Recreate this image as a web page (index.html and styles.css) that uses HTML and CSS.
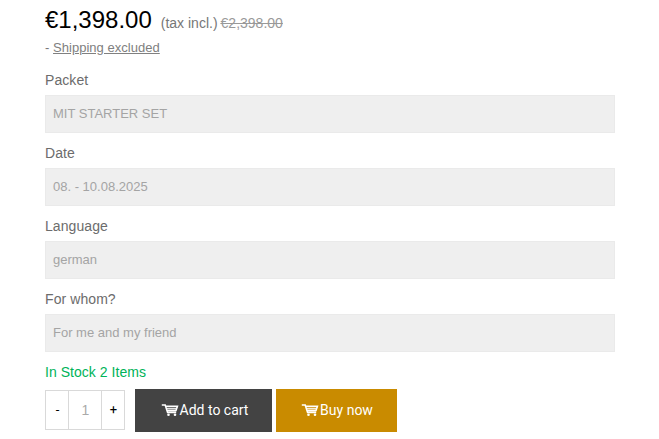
FILE: index.html
```html
<!DOCTYPE html>
<html lang="en">
  <head>
    <meta charset="UTF-8" />
    <meta name="viewport" content="width=device-width, initial-scale=1.0" />
    <title>Product options</title>
    <link rel="stylesheet" href="styles.css">
  </head>
  <body>
    <form class="product">
      <div class="prices">
        <span class="price">€1,398.00</span>
        <span class="tax">(tax incl.)</span>
        <span class="old-price">€2,398.00</span>
      </div>
      <div class="shipping">- <a href="#">Shipping excluded</a></div>

      <div class="option">
        <div class="option-label">Packet</div>
        <div class="option-value">MIT STARTER SET</div>
      </div>
      <div class="option">
        <div class="option-label">Date</div>
        <div class="option-value">08. - 10.08.2025</div>
      </div>
      <div class="option">
        <div class="option-label">Language</div>
        <div class="option-value">german</div>
      </div>
      <div class="option">
        <div class="option-label">For whom?</div>
        <div class="option-value">For me and my friend</div>
      </div>

      <div class="stock">In Stock 2 Items</div>

      <div class="actions">
        <div class="quantity">
          <button type="button" class="qty-btn">-</button>
          <span class="qty-value">1</span>
          <button type="button" class="qty-btn">+</button>
        </div>
        <button type="button" class="btn btn-cart">
          <svg class="icon" viewBox="0 0 18 14"><path class="frame" d="M.8 2h3.4l2.4 7.4h8.6M4.8 3.2h11.6l-1.4 4.2H6.2" /><path class="rack" d="M6 5.3h9" /><circle cx="7.5" cy="11.7" r="1.3" /><circle cx="14" cy="11.7" r="1.3" /></svg>
          Add to cart
        </button>
        <button type="button" class="btn btn-buy">
          <svg class="icon" viewBox="0 0 18 14"><path class="frame" d="M.8 2h3.4l2.4 7.4h8.6M4.8 3.2h11.6l-1.4 4.2H6.2" /><path class="rack" d="M6 5.3h9" /><circle cx="7.5" cy="11.7" r="1.3" /><circle cx="14" cy="11.7" r="1.3" /></svg>
          Buy now
        </button>
      </div>
    </form>
  </body>
</html>
```

FILE: styles.css
```css
body {
  margin: 0;
  background-color: #fff;
  color: #6c6c6c;
  font-family: "Liberation Sans", Arial, sans-serif;
  font-size: 14px;
}
.product {
  width: 570px;
  margin-left: 45px;
  padding-top: 4px;
}
.prices {
  display: flex;
  align-items: baseline;
  height: 32px;
  line-height: 32px;
}
.price {
  margin-right: 9px;
  color: #000;
  font-size: 24px;
}
.tax {
  margin-right: 3px;
  color: #777;
}
.old-price {
  color: #999;
  text-decoration: line-through;
}
.shipping {
  height: 24px;
  line-height: 24px;
  color: #777;
  font-size: 13px;
  letter-spacing: 0.03px;
}
.shipping a {
  color: #808080;
}
.option {
  height: 63px;
  margin-top: 10px;
}
.option-label {
  height: 25px;
  line-height: 20px;
  letter-spacing: 0.08px;
}
.option-value {
  box-sizing: border-box;
  height: 38px;
  padding: 0 7px;
  border: 1px solid #eaeaea;
  background-color: #efefef;
  color: #a4a4a4;
  font-size: 13px;
  line-height: 36px;
}
.stock {
  margin-top: 10px;
  height: 27px;
  line-height: 20px;
  color: #00b359;
  letter-spacing: 0.04px;
}
.actions {
  display: flex;
  align-items: flex-start;
}
.quantity {
  display: flex;
  box-sizing: border-box;
  width: 80px;
  height: 40px;
  margin: 1px 10px 0 0;
  border: 1px solid #d9d9d9;
}
.qty-btn {
  width: 22px;
  padding: 0 0 1px 1px;
  border: 0;
  background-color: #fff;
  color: #000;
  font: 13px Roboto, sans-serif;
}
.qty-value {
  flex: 1;
  padding-left: 1px;
  border: 1px solid #d9d9d9;
  border-width: 0 1px;
  color: #aaa;
  line-height: 38px;
  text-align: center;
}
.btn {
  display: flex;
  align-items: center;
  justify-content: center;
  gap: 1px;
  height: 43px;
  padding: 0 0 1px 1px;
  border: 0;
  color: #fff;
  font: 14px Roboto, sans-serif;
}
.btn-cart {
  width: 137px;
  margin-right: 4px;
  padding-left: 2px;
  background-color: #434343;
}
.btn-buy {
  width: 121px;
  background-color: #c98b00;
}
.icon {
  width: 18px;
  height: 14px;
  fill: #fff;
  stroke: #fff;
  stroke-width: 0;
}
.frame {
  fill: none;
  stroke-width: 1.6;
}
.rack {
  stroke-width: 1.1;
}
```
